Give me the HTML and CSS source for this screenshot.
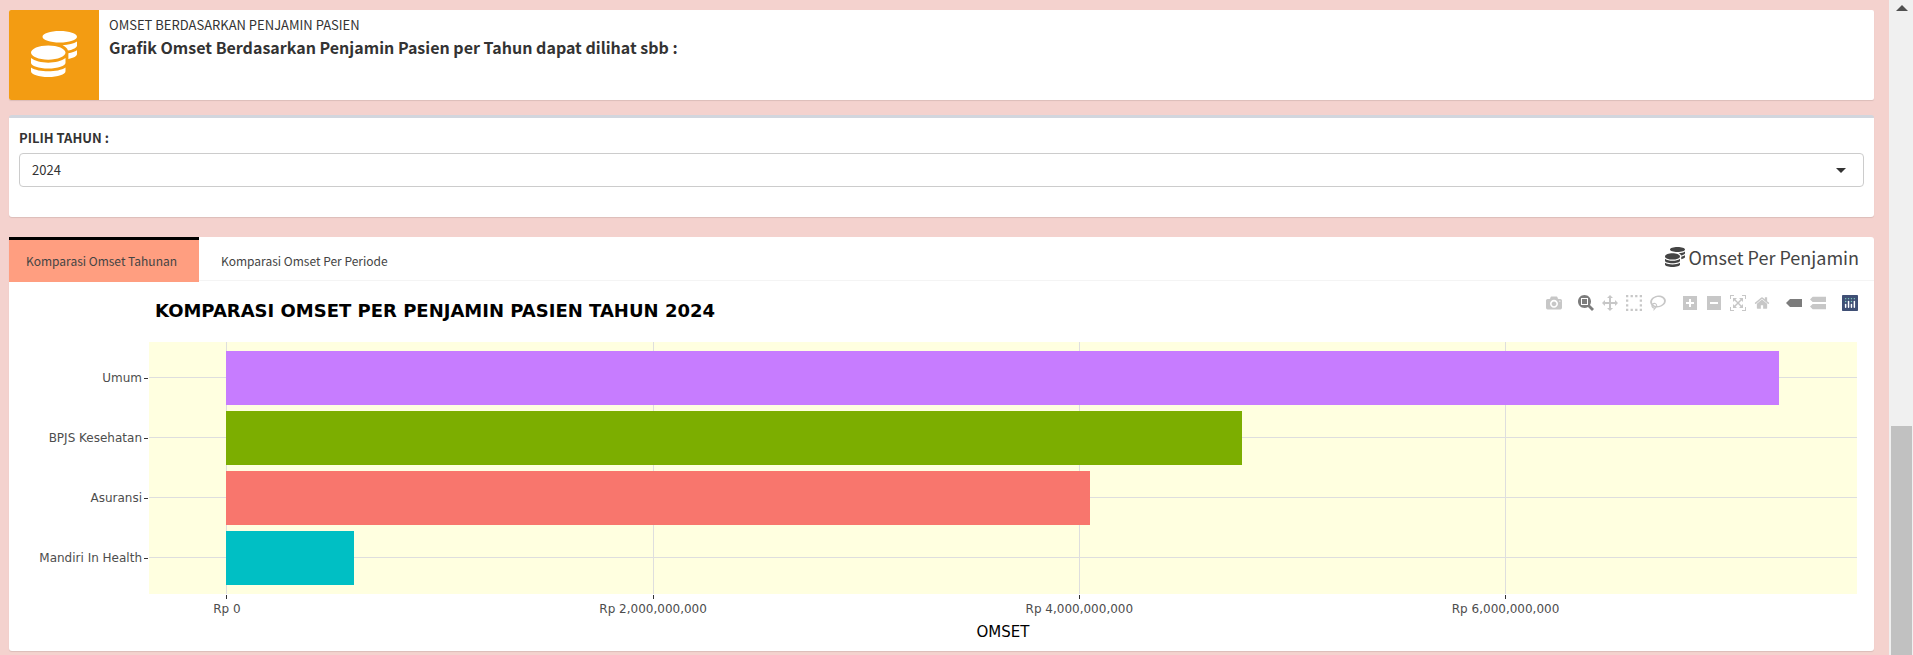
FILE: index.html
```html
<!DOCTYPE html>
<html lang="id">
<head>
<meta charset="utf-8">
<meta name="viewport" content="width=device-width, initial-scale=1">
<title>Omset Berdasarkan Penjamin Pasien</title>
<link rel="stylesheet" href="styles.css">
</head>
<body>
<svg class="sprite" aria-hidden="true">
  <symbol id="coins" viewBox="0 0 512 512"><path d="M0 405.3V448c0 35.3 86 64 192 64s192-28.7 192-64v-42.7C342.7 434.4 267.2 448 192 448S41.3 434.4 0 405.3zM320 128c106 0 192-28.7 192-64S426 0 320 0 128 28.7 128 64s86 64 192 64zM0 300.4V352c0 35.3 86 64 192 64s192-28.7 192-64v-51.6c-41.3 34-116.9 51.6-192 51.6S41.3 334.4 0 300.4zm416 11c57.3-11.1 96-31.7 96-55.4v-42.7c-23.2 16.4-57.3 27.6-96 34.5v63.6zM192 160C86 160 0 195.8 0 240s86 80 192 80 192-35.8 192-80-86-80-192-80zm219.3 56.3c60-10.8 100.7-32 100.7-56.3v-42.7c-35.5 25.1-96.5 38.6-160.7 41.8 29.5 14.3 51.2 33.5 60 57.2z"/></symbol>
</svg>
<div class="page">
  <main class="content">
    <section class="info-box">
      <span class="info-icon"><svg width="46" height="46" aria-hidden="true"><use href="#coins"/></svg></span>
      <div class="info-text">
        <p class="info-label">OMSET BERDASARKAN PENJAMIN PASIEN</p>
        <h1 class="info-title">Grafik Omset Berdasarkan Penjamin Pasien per Tahun dapat dilihat sbb :</h1>
      </div>
    </section>

    <section class="filter-box">
      <label class="filter-label" for="tahun">PILIH TAHUN :</label>
      <div class="select-wrap">
        <select id="tahun" class="select"><option>2024</option></select>
        <svg class="caret" width="10" height="5" viewBox="0 0 10 5" aria-hidden="true"><path d="M0 0h10L5 5z"/></svg>
      </div>
    </section>

    <section class="tab-box">
      <header class="tab-head">
        <nav class="tabs">
          <a class="tab tab-active" href="#tahunan">Komparasi Omset Tahunan</a>
          <a class="tab" href="#periode">Komparasi Omset Per Periode</a>
        </nav>
        <h2 class="tab-title"><svg width="20" height="20" aria-hidden="true"><use href="#coins"/></svg>Omset Per Penjamin</h2>
      </header>

      <div class="chart" id="tahunan">
        <div class="chart-head">
          <h3 class="chart-title">KOMPARASI OMSET PER PENJAMIN PASIEN TAHUN 2024</h3>
          <div class="modebar">
            <div class="group">
              <button class="tool" aria-label="Download plot"><svg viewBox="0 0 1000 1000"><path transform="matrix(1 0 0 -1 0 850)" d="m500 450c-83 0-150-67-150-150 0-83 67-150 150-150 83 0 150 67 150 150 0 83-67 150-150 150z m400 150h-120c-16 0-34 13-39 29l-31 93c-6 15-23 28-40 28h-340c-16 0-34-13-39-28l-31-94c-6-15-23-28-40-28h-120c-55 0-100-45-100-100v-450c0-55 45-100 100-100h800c55 0 100 45 100 100v450c0 55-45 100-100 100z m-400-550c-138 0-250 112-250 250 0 138 112 250 250 250 138 0 250-112 250-250 0-138-112-250-250-250z m365 380c-19 0-35 16-35 35 0 19 16 35 35 35 19 0 35-16 35-35 0-19-16-35-35-35z"/></svg></button>
            </div>
            <div class="group">
              <button class="tool tool-on" aria-label="Zoom"><svg viewBox="0 0 1000 1000"><path transform="matrix(1 0 0 -1 0 850)" d="m1000-25l-250 251c40 63 63 138 63 218 0 224-182 406-407 406-224 0-406-182-406-406s183-406 407-406c80 0 155 22 218 62l250-250 125 125z m-812 250l0 438 437 0 0-438-437 0z m62 375l313 0 0-312-313 0 0 312z"/></svg></button>
              <button class="tool" aria-label="Pan"><svg viewBox="0 0 1000 1000"><path transform="matrix(1 0 0 -1 0 850)" d="m1000 350l-187 188 0-125-250 0 0 250 125 0-188 187-187-187 125 0 0-250-250 0 0 125-188-188 186-187 0 125 252 0 0-250-125 0 187-188 188 188-125 0 0 250 250 0 0-126 187 188z"/></svg></button>
              <button class="tool" aria-label="Box select"><svg viewBox="0 0 1000 1000"><path d="M0 0h143v143H0zM286 0h143v143H286zM571 0h143v143H571zM857 0h143v143H857zM0 286h143v143H0zM857 286h143v143H857zM0 571h143v143H0zM857 571h143v143H857zM0 857h143v143H0zM286 857h143v143H286zM571 857h143v143H571zM857 857h143v143H857z"/></svg></button>
              <button class="tool" aria-label="Lasso select"><svg viewBox="0 0 1031 1000"><path transform="matrix(1 0 0 -1 0 850)" d="m1018 538c-36 207-290 336-568 286-277-48-473-256-436-463 10-57 36-108 76-151-13-66 11-137 68-183 34-28 75-41 114-42l-55-70 0 0c-2-1-3-2-4-3-10-14-8-34 5-45 14-11 34-8 45 4 1 1 2 3 2 5l0 0 113 140c16 11 31 24 45 40 4 3 6 7 8 11 48-3 100 0 151 9 278 48 473 255 436 462z m-624-379c-80 14-149 48-197 96 42 42 109 47 156 9 33-26 47-66 41-105z m-187-74c-19 16-33 37-39 60 50-32 109-55 174-68-42-25-95-24-135 8z m360 75c-34-7-69-9-102-8 8 62-16 128-68 170-73 59-175 54-244-5-9 20-16 40-20 61-28 159 121 317 333 354s407-60 434-217c28-159-121-318-333-355z"/></svg></button>
            </div>
            <div class="group">
              <button class="tool" aria-label="Zoom in"><svg viewBox="0 0 875 1000"><path transform="matrix(1 0 0 -1 0 850)" d="m1 787l0-875 875 0 0 875-875 0z m687-500l-187 0 0-187-125 0 0 187-188 0 0 125 188 0 0 187 125 0 0-187 187 0 0-125z"/></svg></button>
              <button class="tool" aria-label="Zoom out"><svg viewBox="0 0 875 1000"><path transform="matrix(1 0 0 -1 0 850)" d="m0 788l0-876 875 0 0 876-875 0z m688-500l-500 0 0 125 500 0 0-125z"/></svg></button>
              <button class="tool" aria-label="Autoscale"><svg viewBox="0 0 1000 1000"><path transform="matrix(1 0 0 -1 0 850)" d="m250 850l-187 0-63 0 0-62 0-188 63 0 0 188 187 0 0 62z m688 0l-188 0 0-62 188 0 0-188 62 0 0 188 0 62-62 0z m-875-938l0 188-63 0 0-188 0-62 63 0 187 0 0 62-187 0z m875 188l0-188-188 0 0-62 188 0 62 0 0 62 0 188-62 0z m-125 188l-1 0-93-94-156 156 156 156 92-93 2 0 0 250-250 0 0-2 93-92-156-156-156 156 94 92 0 2-250 0 0-250 0 0 93 93 157-156-157-156-93 94 0 0 0-250 250 0 0 0-94 93 156 157 156-157-93-93 0 0 250 0 0 250z"/></svg></button>
              <button class="tool" aria-label="Reset axes"><svg viewBox="0 0 929 1000"><path transform="matrix(1 0 0 -1 0 850)" d="m786 296v-267q0-15-11-26t-25-10h-214v214h-143v-214h-214q-15 0-25 10t-11 26v267q0 1 0 2t0 2l321 264 321-264q1-1 1-4z m124 39l-34-41q-5-5-12-6h-2q-7 0-12 3l-386 322-386-322q-7-4-13-4-7 2-12 7l-35 41q-4 5-3 13t6 12l401 334q18 15 42 15t43-15l136-114v109q0 8 5 13t13 5h107q8 0 13-5t5-13v-227l122-102q5-5 6-12t-4-13z"/></svg></button>
            </div>
            <div class="group">
              <button class="tool tool-on" aria-label="Show closest data on hover"><svg viewBox="0 0 1500 1000"><path transform="matrix(1 0 0 -1 0 850)" d="m375 725l0 0-375-375 375-374 0-1 1125 0 0 750-1125 0z"/></svg></button>
              <button class="tool" aria-label="Compare data on hover"><svg viewBox="0 0 1125 1000"><path transform="matrix(1 0 0 -1 0 850)" d="m187 786l0 2-187-188 188-187 0 0 937 0 0 373-938 0z m0-499l0 1-187-188 188-188 0 0 937 0 0 376-938-1z"/></svg></button>
            </div>
            <div class="group">
              <a class="tool" href="#plotly" aria-label="Produced with Plotly"><svg viewBox="0 0 132 132"><rect class="logo-bg" width="132" height="132" rx="6"/><g class="logo-dot"><circle cx="78" cy="54" r="6"/><circle cx="102" cy="30" r="6"/><circle cx="78" cy="30" r="6"/><circle cx="54" cy="30" r="6"/><circle cx="30" cy="30" r="6"/><circle cx="30" cy="54" r="6"/></g><g class="logo-bar"><rect x="24" y="72" width="12" height="36" rx="6"/><rect x="72" y="72" width="12" height="36" rx="6"/><rect x="48" y="48" width="12" height="60" rx="6"/><rect x="96" y="48" width="12" height="60" rx="6"/></g></svg></a>
            </div>
          </div>
        </div>

        <div class="plot-area">
          <div class="y-axis">
            <span class="y-label">Umum</span>
            <span class="y-label">BPJS Kesehatan</span>
            <span class="y-label">Asuransi</span>
            <span class="y-label">Mandiri In Health</span>
          </div>
          <div class="plot">
            <div class="grid-x x-scale"><i></i><i></i><i></i><i></i></div>
            <div class="bars">
              <div class="row"><div class="bar bar-umum" style="width:90.93%"></div></div>
              <div class="row"><div class="bar bar-bpjs" style="width:59.46%"></div></div>
              <div class="row"><div class="bar bar-asuransi" style="width:50.57%"></div></div>
              <div class="row"><div class="bar bar-mandiri" style="width:7.47%"></div></div>
            </div>
          </div>
          <div class="x-axis x-scale">
            <span class="x-label">Rp 0</span>
            <span class="x-label">Rp 2,000,000,000</span>
            <span class="x-label">Rp 4,000,000,000</span>
            <span class="x-label">Rp 6,000,000,000</span>
          </div>
          <p class="x-title">OMSET</p>
        </div>
      </div>
    </section>
  </main>
  <div class="scrollbar" aria-hidden="true">
    <svg class="scroll-up" width="12" height="6" viewBox="0 0 12 6"><path d="M0 6h12L6 0z"/></svg>
    <div class="track"><div class="thumb"></div></div>
  </div>
</div>
</body>
</html>
```

FILE: styles.css
```css
* { box-sizing: border-box; }
body, h1, h2, h3, p { margin: 0; }
body {
  background: #f4d2ce;
  color: #333;
  font: 13px/20px "Noto Sans CJK SC", "Noto Sans", sans-serif;
}
.sprite { position: absolute; width: 0; height: 0; }
svg { display: block; fill: currentColor; }

.page { display: flex; min-height: 100vh; }
.content {
  flex: 1;
  min-width: 0;
  display: flex;
  flex-direction: column;
  padding: 10px 15px 4px 9px;
}

/* info box */
.info-box {
  display: flex;
  min-height: 90px;
  margin-bottom: 15px;
  background: #fff;
  border-radius: 2px;
  box-shadow: 0 1px 1px rgba(0, 0, 0, .1);
}
.info-icon {
  display: grid;
  place-items: center;
  width: 90px;
  padding-bottom: 2px;
  color: #fff;
  background: #f39c12;
  border-radius: 2px 0 0 2px;
}
.info-text { padding: 5px 10px; }
.info-label { font-size: 13px; font-weight: 400; }
.info-title { font-size: 16px; line-height: 24px; font-weight: 700; }

/* filter */
.filter-box {
  margin-bottom: 20px;
  padding: 10px 10px 30px;
  background: #fff;
  border-top: 3px solid #d2d6de;
  border-radius: 3px;
  box-shadow: 0 1px 1px rgba(0, 0, 0, .1);
}
.filter-label { display: block; margin-bottom: 5px; font-weight: 700; }
.select-wrap { display: grid; align-items: center; }
.select-wrap > * { grid-area: 1 / 1; }
.select {
  appearance: none;
  width: 100%;
  height: 34px;
  padding: 0 12px;
  color: #333;
  background: #fff;
  border: 1px solid #ccc;
  border-radius: 4px;
  font: inherit;
}
.caret { justify-self: end; margin-right: 18px; pointer-events: none; }

/* tabs */
.tab-box {
  flex: 1;
  background: #fff;
  border-radius: 3px;
  box-shadow: 0 1px 1px rgba(0, 0, 0, .1);
}
.tab-head {
  display: flex;
  justify-content: space-between;
  height: 44px;
  border-bottom: 1px solid #f4f4f4;
}
.tabs { display: flex; height: 45px; gap: 5px; }
.tab {
  padding: 11px 22px 11px 17px;
  color: #444;
  border-top: 3px solid transparent;
  text-decoration: none;
  font-size: 12px;
}
.tab-active { background: #ff9e80; border-top-color: #000; }
.tab-title {
  display: flex;
  align-items: center;
  gap: 4px;
  padding: 0 15px 3px 0;
  color: #444;
  font-size: 18px;
  font-weight: 400;
}

/* chart */
.chart { color: #4d4d4d; font-family: "DejaVu Sans", sans-serif; font-size: 12px; }
.chart-head {
  display: flex;
  justify-content: space-between;
  height: 61px;
  padding: 10px 12px 0 146px;
}
.chart-title { margin-top: 10px; color: #000; font-size: 18px; line-height: 20px; font-weight: 700; }
.modebar { display: flex; gap: 8px; height: 24px; }
.group { display: flex; }
.tool {
  display: grid;
  place-items: center;
  width: 24px;
  height: 24px;
  padding: 0;
  border: 0;
  background: none;
  color: #c7c7c7;
}
.tool svg { width: 16px; height: 16px; }
.tool-on { color: #7c7c7c; }
.logo-bg { fill: #3f4f75; }
.logo-dot { fill: #80cfbe; }
.logo-bar { fill: #fff; }

.plot-area {
  display: grid;
  grid-template-columns: 140px 1fr;
  padding-right: 17px;
}
.y-axis { display: flex; flex-direction: column; padding: 6px 1px; }
.y-label {
  display: flex;
  align-items: center;
  justify-content: flex-end;
  gap: 2px;
  height: 60px;
}
.y-label::after { content: ""; width: 4px; height: 1px; background: #333; }
.plot { display: grid; background: #ffffe0; }
.plot > * { grid-area: 1 / 1; }
/* 2,000,000,000 per column, starting at the zero line */
.x-scale {
  display: grid;
  grid-template-columns: repeat(3, 26.14%) 1fr;
  padding-left: 4.53%;
}
.grid-x i { border-left: 1px solid #dedede; }
.bars { display: flex; flex-direction: column; padding: 6px 0; }
.row {
  display: flex;
  align-items: center;
  height: 60px;
  background: linear-gradient(#dedede, #dedede) 0 29px / 100% 1px no-repeat;
}
.bar { height: 54px; margin-left: 4.53%; }
.bar-umum { background: #c77cff; }
.bar-bpjs { background: #7cae00; }
.bar-asuransi { background: #f8766d; }
.bar-mandiri { background: #00bfc4; }

.x-axis { grid-column: 2; padding-top: 1px; }
.x-label {
  display: flex;
  flex-direction: column;
  align-items: center;
  width: 1px;
  line-height: 20px;
  white-space: nowrap;
}
.x-label::before { content: ""; width: 1px; height: 4px; background: #333; }
.x-title {
  grid-column: 2;
  padding: 3px 0 9px;
  color: #000;
  font-size: 15px;
  line-height: 20px;
  text-align: center;
}

/* scrollbar */
.scrollbar {
  display: flex;
  flex-direction: column;
  width: 24px;
  padding: 5px 1px 0 2px;
  color: #505050;
  background: #f0f0f0;
}
.scroll-up { align-self: center; }
.track { flex: 1; display: flex; align-items: flex-end; }
.thumb { width: 100%; height: 229px; background: #c1c1c1; }
```
